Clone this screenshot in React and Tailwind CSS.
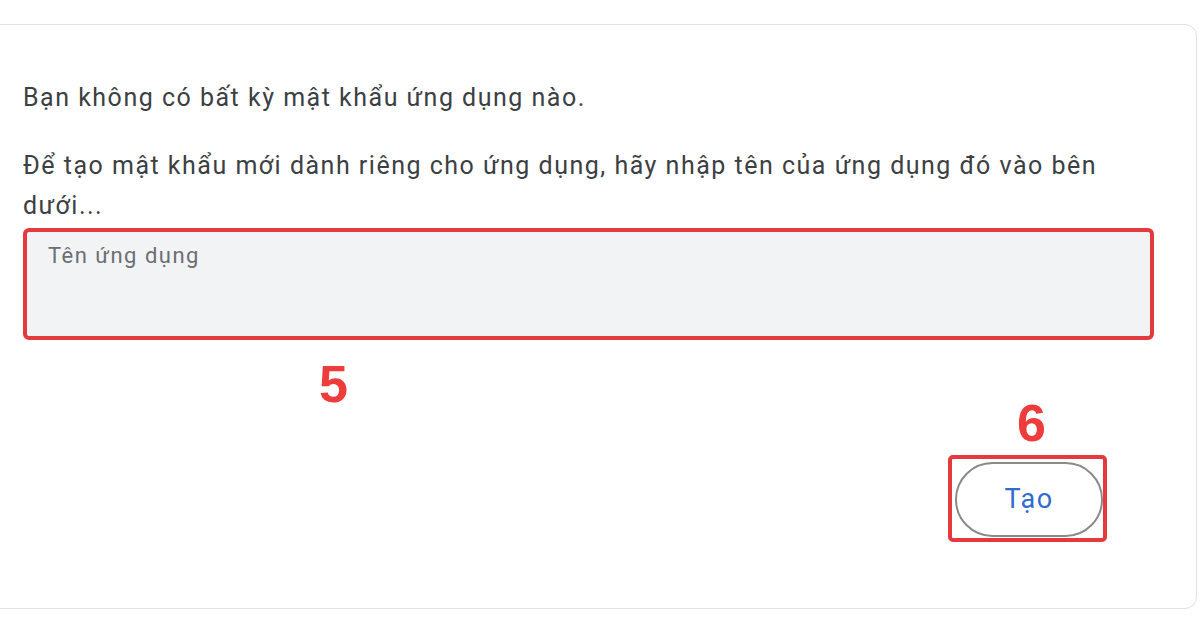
import React from 'react';

const App = () => {
  return (
    <div className="w-[1200px] h-[630px] bg-white overflow-hidden pt-[24px] font-['Roboto',sans-serif]">
      <div className="ml-[-16px] mr-[3px] h-[585px] rounded-[12px] border border-[#e0e0e0] bg-white pl-[38px] pr-[42px] pt-[57px]">
        <p className="text-[25px] leading-[32px] tracking-[1.5px] text-[#3c4043]">
          Bạn không có bất kỳ mật khẩu ứng dụng nào.
        </p>
        <p className="mt-[32px] text-[25px] leading-[40px] tracking-[1.5px] text-[#3c4043]">
          Để tạo mật khẩu mới dành riêng cho ứng dụng, hãy nhập tên của ứng dụng đó vào bên dưới...
        </p>
        <div className="mt-[2px] h-[112px] rounded-[6px] border-[4px] border-[#e53a3d] bg-[#f1f3f4] pl-[21px] pt-[11px]">
          <span className="text-[22px] leading-[26px] tracking-[1.5px] text-[#6b6e72]">Tên ứng dụng</span>
        </div>
        <div className="pl-[296px] mt-[18px] text-[52px] font-bold leading-[52px] text-[#ee3b3c] font-['Liberation_Sans',sans-serif]">
          5
        </div>
        <div className="flex justify-end pr-[47px]">
          <div className="flex flex-col items-center">
            <div className="mt-[-13px] pl-[8px] text-[52px] font-bold leading-[52px] text-[#ee3b3c] font-['Liberation_Sans',sans-serif]">
              6
            </div>
            <div className="mt-[6px] rounded-[5px] border-[4px] border-[#e53a3d] pl-[3px] pt-[3px] pb-[1px]">
              <button className="flex h-[75px] w-[148px] items-center justify-center rounded-full border-2 border-[#8a8a8a] bg-white text-[27px] tracking-[1.5px] text-[#2f6bd0]">
                Tạo
              </button>
            </div>
          </div>
        </div>
      </div>
    </div>
  );
};

export default App;
